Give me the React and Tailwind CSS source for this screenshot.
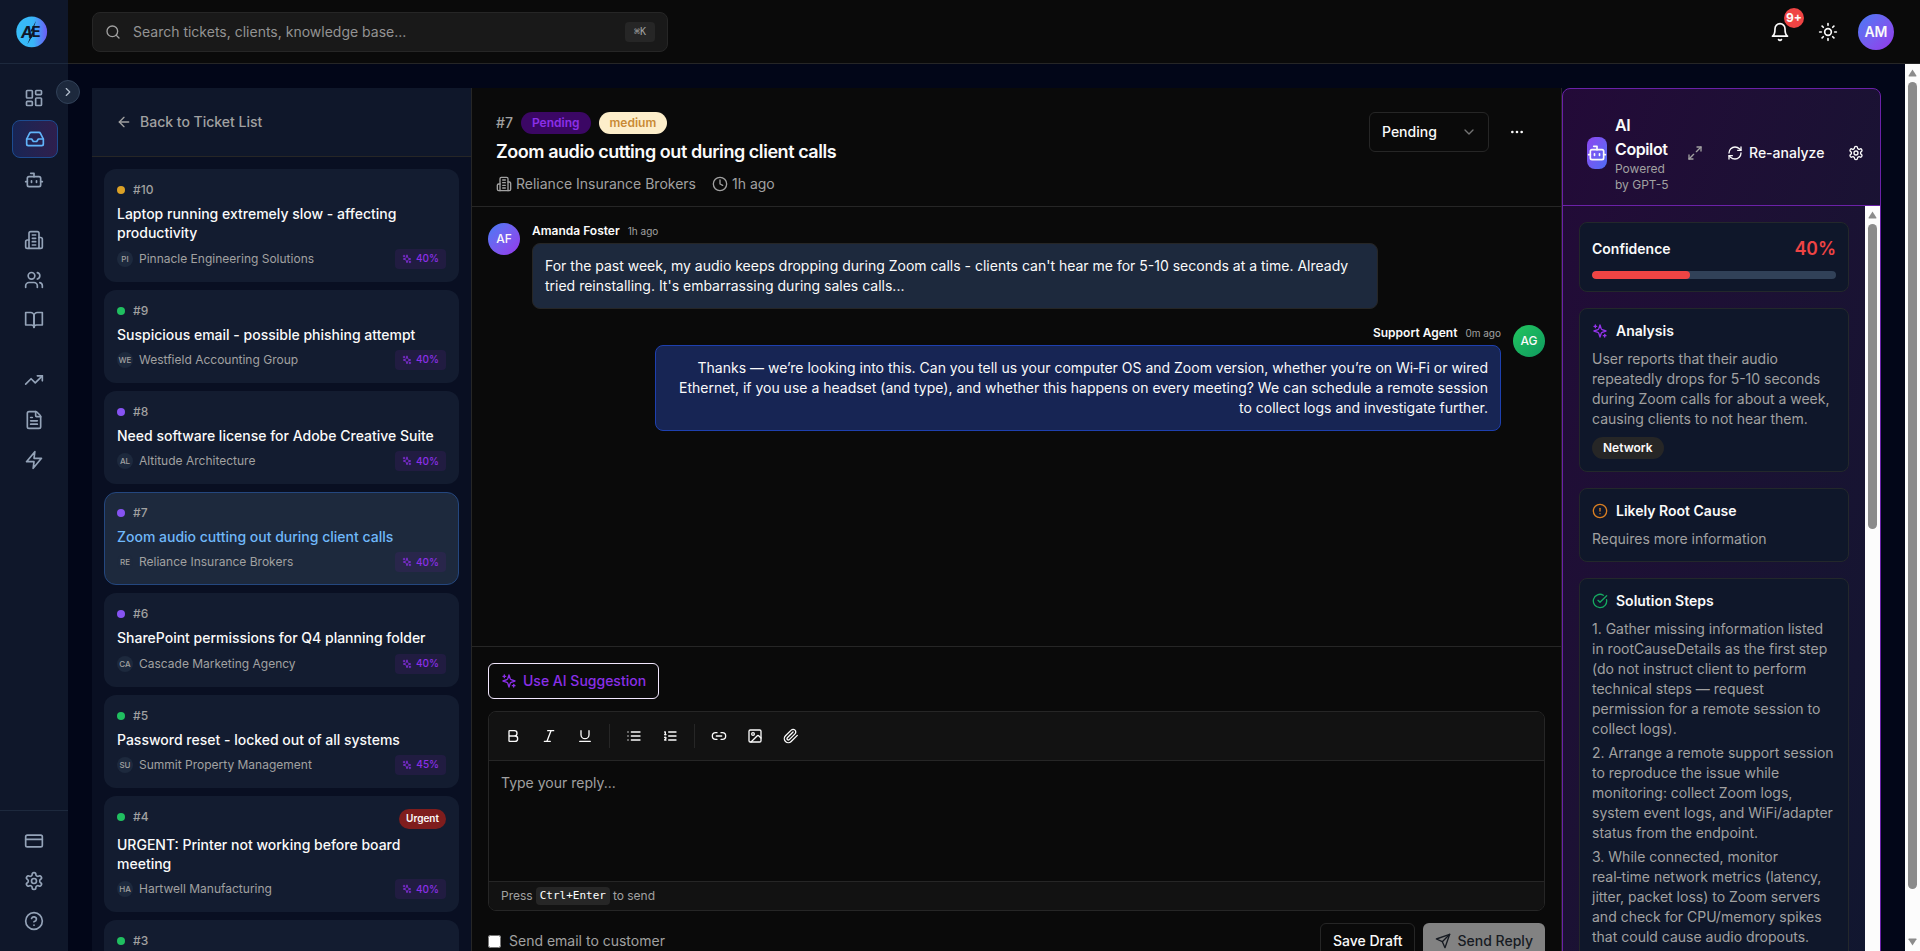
import React from 'react';
import {
  LayoutDashboard,
  Inbox,
  Bot,
  Users,
  TrendingUp,
  FileText,
  CreditCard,
  CircleHelp,
  ChevronRight,
  ChevronDown,
  Search,
  Sun,
  ArrowLeft,
  Clock,
  Ellipsis,
  Bold,
  Italic,
  Underline,
  Link2,
  Image,
  Maximize2,
  RefreshCw,
  CircleAlert,
  CircleCheckBig,
} from 'lucide-react';

const Icon = ({ children, className }) => (
  <svg
    xmlns="http://www.w3.org/2000/svg"
    viewBox="0 0 24 24"
    fill="none"
    stroke="currentColor"
    strokeWidth="2"
    strokeLinecap="round"
    strokeLinejoin="round"
    aria-hidden="true"
    className={className}
  >
    {children}
  </svg>
);

const Sparkles = ({ className }) => (
  <Icon className={className}>
    <path d="m12 3-1.912 5.813a2 2 0 0 1-1.275 1.275L3 12l5.813 1.912a2 2 0 0 1 1.275 1.275L12 21l1.912-5.813a2 2 0 0 1 1.275-1.275L21 12l-5.813-1.912a2 2 0 0 1-1.275-1.275L12 3Z" />
    <path d="M5 3v4" />
    <path d="M19 17v4" />
    <path d="M3 5h4" />
    <path d="M17 19h4" />
  </Icon>
);

const Building = ({ className }) => (
  <Icon className={className}>
    <path d="M6 22V4a2 2 0 0 1 2-2h8a2 2 0 0 1 2 2v18Z" />
    <path d="M6 12H4a2 2 0 0 0-2 2v6a2 2 0 0 0 2 2h2" />
    <path d="M18 9h2a2 2 0 0 1 2 2v9a2 2 0 0 1-2 2h-2" />
    <path d="M10 6h4" />
    <path d="M10 10h4" />
    <path d="M10 14h4" />
    <path d="M10 18h4" />
  </Icon>
);

const Book = ({ className }) => (
  <Icon className={className}>
    <path d="M2 3h6a4 4 0 0 1 4 4v14a3 3 0 0 0-3-3H2z" />
    <path d="M22 3h-6a4 4 0 0 0-4 4v14a3 3 0 0 1 3-3h7z" />
  </Icon>
);

const Zap = ({ className }) => (
  <Icon className={className}>
    <polygon points="13 2 3 14 12 14 11 22 21 10 12 10 13 2" />
  </Icon>
);

const Gear = ({ className }) => (
  <Icon className={className}>
    <path d="M12.22 2h-.44a2 2 0 0 0-2 2v.18a2 2 0 0 1-1 1.73l-.43.25a2 2 0 0 1-2 0l-.15-.08a2 2 0 0 0-2.73.73l-.22.38a2 2 0 0 0 .73 2.73l.15.1a2 2 0 0 1 1 1.72v.51a2 2 0 0 1-1 1.74l-.15.09a2 2 0 0 0-.73 2.73l.22.38a2 2 0 0 0 2.73.73l.15-.08a2 2 0 0 1 2 0l.43.25a2 2 0 0 1 1 1.73V20a2 2 0 0 0 2 2h.44a2 2 0 0 0 2-2v-.18a2 2 0 0 1 1-1.73l.43-.25a2 2 0 0 1 2 0l.15.08a2 2 0 0 0 2.73-.73l.22-.39a2 2 0 0 0-.73-2.73l-.15-.08a2 2 0 0 1-1-1.74v-.5a2 2 0 0 1 1-1.74l.15-.09a2 2 0 0 0 .73-2.73l-.22-.38a2 2 0 0 0-2.73-.73l-.15.08a2 2 0 0 1-2 0l-.43-.25a2 2 0 0 1-1-1.73V4a2 2 0 0 0-2-2z" />
    <circle cx="12" cy="12" r="3" />
  </Icon>
);

const Bell = ({ className }) => (
  <Icon className={className}>
    <path d="M6 8a6 6 0 0 1 12 0c0 7 3 9 3 9H3s3-2 3-9" />
    <path d="M10.3 21a1.94 1.94 0 0 0 3.4 0" />
  </Icon>
);

const BulletList = ({ className }) => (
  <Icon className={className}>
    <path d="M8 6h13" />
    <path d="M8 12h13" />
    <path d="M8 18h13" />
    <path d="M3 6h.01" />
    <path d="M3 12h.01" />
    <path d="M3 18h.01" />
  </Icon>
);

const NumberList = ({ className }) => (
  <Icon className={className}>
    <path d="M10 6h11" />
    <path d="M10 12h11" />
    <path d="M10 18h11" />
    <path d="M4 6h1v4" />
    <path d="M4 10h2" />
    <path d="M6 18H4c0-1 2-2 2-3s-1-1.5-2-1" />
  </Icon>
);

const Clip = ({ className }) => (
  <Icon className={className}>
    <path d="m21.44 11.05-9.19 9.19a6 6 0 0 1-8.49-8.49l8.57-8.57A4 4 0 1 1 18 8.84l-8.59 8.57a2 2 0 0 1-2.83-2.83l8.49-8.48" />
  </Icon>
);

const Send = ({ className }) => (
  <Icon className={className}>
    <path d="m22 2-7 20-4-9-9-4Z" />
    <path d="M22 2 11 13" />
  </Icon>
);

const Logo = () => (
  <svg viewBox="0 0 32 32" className="w-8 h-8" role="img" aria-label="AE">
    <defs>
      <linearGradient id="logo" x1="0" y1="0" x2="1" y2="0">
        <stop offset="0" stopColor="#38bdf8" />
        <stop offset="0.55" stopColor="#38b6f8" />
        <stop offset="1" stopColor="#6d5cf6" />
      </linearGradient>
    </defs>
    <circle cx="15.7" cy="15.8" r="15.4" fill="url(#logo)" />
    <text
      x="5"
      y="21.6"
      fill="#0f172a"
      fontFamily="Inter, sans-serif"
      fontSize="16"
      fontWeight="700"
      fontStyle="italic"
    >
      A
    </text>
    <text x="15.5" y="21.2" fill="#0f172a" fontFamily="Inter, sans-serif" fontSize="15" fontWeight="700">
      E
    </text>
    <path d="M20 5 14.2 15.6h2.2L11.4 28.2l7-11.4h-2.4z" fill="#0f172a" />
  </svg>
);

const navGroups = [
  [
    { label: 'Dashboard', icon: LayoutDashboard },
    { label: 'Tickets', icon: Inbox, active: true },
    { label: 'AI Agent', icon: Bot },
  ],
  [
    { label: 'Clients', icon: Building },
    { label: 'Team', icon: Users },
    { label: 'Knowledge Base', icon: Book },
  ],
  [
    { label: 'Analytics', icon: TrendingUp },
    { label: 'Reports', icon: FileText },
    { label: 'Automations', icon: Zap },
  ],
];

const footerNav = [
  { label: 'Billing', icon: CreditCard },
  { label: 'Settings', icon: Gear },
  { label: 'Help', icon: CircleHelp },
];

const tickets = [
  { id: 10, dot: 'bg-[#dba126]', title: 'Laptop running extremely slow - affecting productivity', code: 'PI', client: 'Pinnacle Engineering Solutions', score: 40 },
  { id: 9, dot: 'bg-[#20bf60]', title: 'Suspicious email - possible phishing attempt', code: 'WE', client: 'Westfield Accounting Group', score: 40 },
  { id: 8, dot: 'bg-[#8653f2]', title: 'Need software license for Adobe Creative Suite', code: 'AL', client: 'Altitude Architecture', score: 40 },
  { id: 7, dot: 'bg-[#8653f2]', title: 'Zoom audio cutting out during client calls', code: 'RE', client: 'Reliance Insurance Brokers', score: 40, active: true },
  { id: 6, dot: 'bg-[#8653f2]', title: 'SharePoint permissions for Q4 planning folder', code: 'CA', client: 'Cascade Marketing Agency', score: 40 },
  { id: 5, dot: 'bg-[#20bf60]', title: 'Password reset - locked out of all systems', code: 'SU', client: 'Summit Property Management', score: 45 },
  { id: 4, dot: 'bg-[#20bf60]', title: 'URGENT: Printer not working before board meeting', code: 'HA', client: 'Hartwell Manufacturing', score: 40, urgent: true },
  { id: 3, dot: 'bg-[#20bf60]', title: 'VPN connection drops every few minutes', code: 'NO', client: 'Northside Dental Group', score: 40 },
];

const steps = [
  'Gather missing information listed in rootCauseDetails as the first step (do not instruct client to perform technical steps — request permission for a remote session to collect logs).',
  'Arrange a remote support session to reproduce the issue while monitoring: collect Zoom logs, system event logs, and WiFi/adapter status from the endpoint.',
  'While connected, monitor real‑time network metrics (latency, jitter, packet loss) to Zoom servers and check for CPU/memory spikes that could cause audio dropouts.',
];

const NavItem = ({ item }) => {
  const { icon: ItemIcon, label, active } = item;
  return (
    <a
      href="#"
      aria-label={label}
      className={
        active
          ? 'w-fit px-3 py-2 rounded-lg border border-[#1d4b8f] bg-linear-to-r from-[#172554] to-[#2e1f4d] text-[#60b4fa]'
          : 'w-fit px-3 py-2 rounded-lg text-[#94a3b8]'
      }
    >
      <ItemIcon className="w-5 h-5" />
    </a>
  );
};

const Sidebar = () => (
  <aside className="relative flex flex-col shrink-0 w-17 h-full bg-[#0f172a]">
    <div className="flex items-center shrink-0 h-16 px-4 border-b border-slate-800">
      <Logo />
    </div>
    <nav className="flex flex-col grow gap-6 px-3 py-4">
      {navGroups.map((group, i) => (
        <div key={i} className="flex flex-col gap-1">
          {group.map((item) => (
            <NavItem key={item.label} item={item} />
          ))}
        </div>
      ))}
    </nav>
    <div className="flex flex-col gap-1 p-3 border-t border-slate-800">
      {footerNav.map((item) => (
        <NavItem key={item.label} item={item} />
      ))}
    </div>
    {/* collapse toggle, sits on the edge */}
    <button
      type="button"
      aria-label="Expand sidebar"
      className="absolute top-20 -right-3 z-10 flex items-center justify-center w-6 h-6 rounded-full border border-slate-700 bg-slate-800 text-[#b4bfcd]"
    >
      <ChevronRight className="w-3.5 h-3.5" />
    </button>
  </aside>
);

const TopBar = () => (
  <header className="flex items-center justify-between shrink-0 h-16 px-6 border-b border-neutral-800 bg-[#0a0a0a]">
    <label className="flex items-center w-full max-w-xl h-10 gap-3 px-3 rounded-lg border border-neutral-800 bg-[#191919]">
      <Search className="shrink-0 w-4 h-4 text-neutral-400" />
      <input
        type="search"
        aria-label="Search"
        placeholder="Search tickets, clients, knowledge base..."
        className="grow min-w-0 text-sm text-white placeholder:text-[#939393] outline-none"
      />
      <kbd className="flex items-center justify-center w-[30px] h-5 rounded bg-neutral-800 font-['DejaVu_Sans_Mono','DejaVu_Sans',monospace] text-[10px] text-neutral-400">
        ⌘K
      </kbd>
    </label>
    <div className="flex items-center gap-2 text-neutral-50">
      <button type="button" aria-label="Notifications" className="relative flex items-center justify-center w-10 h-10">
        <Bell className="w-5 h-5" />
        <span className="absolute -top-1 -right-1 flex items-center justify-center w-5 h-5 rounded-full bg-[#ef4444] text-xs font-bold">
          9+
        </span>
      </button>
      <button type="button" aria-label="Toggle theme" className="flex items-center justify-center w-10 h-10">
        <Sun className="w-5 h-5" />
      </button>
      <button type="button" aria-label="Account" className="flex items-center justify-center w-10 h-10">
        <span className="flex items-center justify-center w-9 h-9 rounded-full bg-linear-to-br from-[#3f7af5] to-[#9333ea] text-sm font-semibold">
          AM
        </span>
      </button>
    </div>
  </header>
);

const TicketCard = ({ ticket }) => (
  <a
    href="#"
    className={
      ticket.active
        ? 'block p-3 rounded-xl border border-[#24477f] bg-slate-800'
        : 'block p-3 rounded-xl border border-transparent bg-slate-800/50'
    }
  >
    <div className="flex items-start justify-between mb-1.5">
      <div className="flex items-center gap-2">
        <span className={`w-2 h-2 rounded-full ${ticket.dot}`} />
        <span className="text-xs font-medium text-neutral-400">{`#${ticket.id}`}</span>
      </div>
      {ticket.urgent && (
        <span className="flex items-center h-5 px-[7px] rounded-full bg-[#7f1d1d] text-[10px] font-semibold text-neutral-50">
          Urgent
        </span>
      )}
    </div>
    <h3
      className={
        ticket.active
          ? 'mb-1.5 text-sm leading-snug font-medium text-[#70b8fa]'
          : 'mb-1.5 text-sm leading-snug font-medium text-neutral-50'
      }
    >
      {ticket.title}
    </h3>
    <div className="flex items-center justify-between">
      <div className="flex items-center gap-1.5">
        <span className="flex items-center justify-center w-4 h-4 rounded-full bg-slate-800 text-[8px] font-medium text-neutral-400">
          {ticket.code}
        </span>
        <span className="text-xs text-neutral-400">{ticket.client}</span>
      </div>
      <span className="flex items-center h-5 gap-1 px-[7px] rounded bg-[#581c87]/20 text-[10px] font-medium text-[#8b2fe8]">
        <Sparkles className="w-2.5 h-2.5" />
        {`${ticket.score}%`}
      </span>
    </div>
  </a>
);

const TicketList = () => (
  <section className="flex flex-col shrink-0 w-95 overflow-hidden border-r border-neutral-800 bg-slate-900/50">
    <div className="p-4 border-b border-neutral-800 bg-[#0f172a]">
      <button type="button" className="flex items-center h-9 gap-2 px-2 text-sm font-medium text-neutral-400">
        <ArrowLeft className="w-4 h-4" />
        Back to Ticket List
      </button>
    </div>
    <div className="flex flex-col gap-2 p-3">
      {tickets.map((ticket) => (
        <TicketCard key={ticket.id} ticket={ticket} />
      ))}
    </div>
  </section>
);

const TicketHeader = () => (
  <div className="flex items-start justify-between px-6 pt-6 pb-3 border-b border-neutral-800">
    <div>
      <div className="flex items-center gap-2">
        <span className="text-sm font-medium text-neutral-400">#7</span>
        <span className="flex items-center h-[22px] px-[11px] rounded-full bg-[#3b0764] text-xs font-semibold text-[#8b2fe8]">
          Pending
        </span>
        <span className="flex items-center h-[22px] px-[11px] rounded-full bg-[#fdeeca] text-xs font-semibold text-[#c98a35]">
          medium
        </span>
      </div>
      <h1 className="mt-1 text-lg leading-7 font-semibold tracking-tight text-neutral-50">
        Zoom audio cutting out during client calls
      </h1>
      <div className="flex items-center gap-4 mt-2 text-sm text-neutral-400">
        <span className="flex items-center gap-1">
          <Building className="w-4 h-4" />
          Reliance Insurance Brokers
        </span>
        <span className="flex items-center gap-1">
          <Clock className="w-4 h-4" />
          1h ago
        </span>
      </div>
    </div>
    <div className="flex items-center gap-2">
      <div className="relative">
        <select
          aria-label="Status"
          defaultValue="Pending"
          className="appearance-none w-30 h-10 px-3 rounded-md border border-neutral-800 bg-[#0a0a0a] text-sm font-medium text-neutral-50"
        >
          <option>Open</option>
          <option>Pending</option>
          <option>Resolved</option>
        </select>
        <ChevronDown className="absolute top-3 right-3 w-4 h-4 text-neutral-500 pointer-events-none" />
      </div>
      <button type="button" aria-label="More actions" className="flex items-center justify-center w-10 h-10 text-neutral-50">
        <Ellipsis className="w-4 h-4" />
      </button>
    </div>
  </div>
);

const Messages = () => (
  <div className="flex flex-col grow gap-4 p-4 min-h-0 overflow-hidden">
    <article className="flex items-start gap-3">
      <span className="flex items-center justify-center shrink-0 w-8 h-8 rounded-full bg-linear-to-br from-[#3f7af5] to-[#9333ea] text-xs font-medium text-neutral-50">
        AF
      </span>
      <div className="flex flex-col grow">
        <div className="flex items-center gap-2 mb-1">
          <span className="text-xs font-semibold text-neutral-50">Amanda Foster</span>
          <span className="text-[10px] text-neutral-400">1h ago</span>
        </div>
        <p className="w-[846px] max-w-full p-3 rounded-lg border border-neutral-800 bg-slate-800 text-sm text-neutral-50">
          For the past week, my audio keeps dropping during Zoom calls - clients can't hear me for 5-10 seconds at a
          time. Already tried reinstalling. It's embarrassing during sales calls...
        </p>
      </div>
    </article>
    <article className="flex flex-row-reverse items-start gap-3">
      <span className="flex items-center justify-center shrink-0 w-8 h-8 rounded-full bg-linear-to-br from-[#22c55e] to-[#0f9a5f] text-xs font-medium text-neutral-50">
        AG
      </span>
      <div className="flex flex-col items-end grow">
        <div className="flex items-center gap-2 mb-1">
          <span className="text-xs font-semibold text-neutral-50">Support Agent</span>
          <span className="text-[10px] text-neutral-400">0m ago</span>
        </div>
        <p className="w-[846px] max-w-full p-3 rounded-lg border border-[#1e40af] bg-[#172554] text-sm text-right text-neutral-50">
          Thanks — we’re looking into this. Can you tell us your computer OS and Zoom version, whether you’re on Wi‑Fi
          or wired Ethernet, if you use a headset (and type), and whether this happens on every meeting? We can
          schedule a remote session to collect logs and investigate further.
        </p>
      </div>
    </article>
  </div>
);

const ToolButton = ({ label, children }) => (
  <button type="button" aria-label={label} className="flex items-center justify-center w-8 h-8">
    {children}
  </button>
);

const Composer = () => (
  <div className="flex flex-col shrink-0 items-start gap-3 p-4 border-t border-neutral-800">
    <button
      type="button"
      className="flex items-center h-9 gap-1.5 px-3 rounded-md border border-purple-100 text-sm font-medium text-[#8b2fe8]"
    >
      <Sparkles className="w-4 h-4" />
      Use AI Suggestion
    </button>
    <div className="w-full overflow-hidden rounded-lg border border-neutral-800">
      <div className="flex items-center gap-1 p-2 border-b border-neutral-800 bg-[#121212] text-neutral-50">
        <ToolButton label="Bold"><Bold className="w-4 h-4" /></ToolButton>
        <ToolButton label="Italic"><Italic className="w-4 h-4" /></ToolButton>
        <ToolButton label="Underline"><Underline className="w-4 h-4" /></ToolButton>
        <span className="w-px h-6 mx-1 bg-neutral-800" />
        <ToolButton label="Bullet list"><BulletList className="w-4 h-4" /></ToolButton>
        <ToolButton label="Numbered list"><NumberList className="w-4 h-4" /></ToolButton>
        <span className="w-px h-6 mx-1 bg-neutral-800" />
        <ToolButton label="Link"><Link2 className="w-4 h-4" /></ToolButton>
        <ToolButton label="Image"><Image className="w-4 h-4" /></ToolButton>
        <ToolButton label="Attachment"><Clip className="w-4 h-4" /></ToolButton>
      </div>
      <textarea
        aria-label="Reply"
        placeholder="Type your reply..."
        className="block w-full h-30 p-3 resize-none bg-[#0a0a0a] text-sm text-neutral-50 placeholder:text-neutral-400 outline-none"
      />
      <div className="flex items-center h-[29px] gap-[3px] px-3 border-t border-neutral-800 bg-[#121212] text-xs text-neutral-400">
        Press
        <kbd className="flex items-center h-[18px] px-1 rounded bg-neutral-800 font-['DejaVu_Sans_Mono',monospace] text-[11px] text-white">
          Ctrl+Enter
        </kbd>
        to send
      </div>
    </div>
    <div className="flex items-center justify-between w-full">
      <label className="flex items-center gap-2 text-sm text-neutral-400">
        <input type="checkbox" className="w-[13px] h-[13px]" />
        Send email to customer
      </label>
      <div className="flex gap-2">
        <button
          type="button"
          className="flex items-center h-9 px-3 rounded-md border border-neutral-800 text-sm font-medium text-neutral-50"
        >
          Save Draft
        </button>
        <button
          type="button"
          disabled
          className="flex items-center h-9 gap-1.5 px-3 rounded-md bg-[#828282] text-sm font-medium text-[#171b22]"
        >
          <Send className="w-4 h-4" />
          Send Reply
        </button>
      </div>
    </div>
  </div>
);

const CopilotCard = ({ icon, title, children }) => (
  <section className="shrink-0 p-3 rounded-lg border border-[#23282b] bg-[#0f172a]">
    <h3 className="flex items-center gap-2 mb-2 text-sm font-semibold text-neutral-50">
      {icon}
      {title}
    </h3>
    {children}
  </section>
);

const Scrollbar = ({ thumb }) => (
  <div className="flex flex-col items-center shrink-0 w-[15px] h-full gap-1 py-1 bg-[#fcfcfc]">
    <svg viewBox="0 0 9 9" className="shrink-0 w-[9px] h-[10px] fill-[#8b8b8b]" aria-hidden="true">
      <path d="M4.5 1 8.5 7.2Q8.6 8 8 8H1Q.4 8 .5 7.2Z" />
    </svg>
    <div className={`w-[9px] rounded-full bg-[#8b8b8b] ${thumb}`} />
    <svg viewBox="0 0 9 9" className="shrink-0 w-[9px] h-[10px] mt-auto fill-[#8b8b8b]" aria-hidden="true">
      <path d="M4.5 8 8.5 1.8Q8.6 1 8 1H1Q.4 1 .5 1.8Z" />
    </svg>
  </div>
);

const Copilot = () => (
  <aside className="shrink-0 w-80 border-l border-neutral-800 bg-slate-950">
    <div className="flex flex-col h-full overflow-hidden rounded-lg border border-[#6b21a8] bg-linear-to-br from-[#230a38] to-[#10172f]">
      <div className="flex items-center gap-2 pt-6 pb-3 pl-6 border-b border-[#6b21a8] text-neutral-50">
        <span className="flex items-center justify-center shrink-0 w-5 h-8 rounded-lg bg-linear-to-br from-[#8a45f0] to-[#4a6cf5]">
          <Bot className="shrink-0 w-5 h-5" />
        </span>
        <div className="w-14">
          <h2 className="text-base font-semibold tracking-tight">AI Copilot</h2>
          <p className="text-xs text-neutral-400">Powered by GPT-5</p>
        </div>
        <button type="button" aria-label="Expand" className="flex items-center justify-center shrink-0 w-8 h-8 text-neutral-400">
          <Maximize2 className="w-4 h-4" />
        </button>
        <button type="button" className="flex items-center shrink-0 h-9 gap-1.5 px-2 text-sm font-medium">
          <RefreshCw className="w-4 h-4" />
          Re-analyze
        </button>
        <button type="button" aria-label="Copilot settings" className="flex items-center justify-center shrink-0 w-8 h-8">
          <Gear className="w-4 h-4" />
        </button>
      </div>
      <div className="flex grow min-h-0">
        <div className="flex flex-col grow min-w-0 gap-4 p-4 overflow-hidden">
          <section className="shrink-0 p-3 rounded-lg border border-[#23282b] bg-[#0f172a]">
            <div className="flex items-center justify-between mb-2">
              <span className="text-sm font-semibold text-neutral-50">Confidence</span>
              <span className="text-lg font-semibold tabular-nums text-[#ef4444]">40%</span>
            </div>
            <div className="h-2 overflow-hidden rounded-full bg-slate-700">
              <div className="w-2/5 h-full rounded-full bg-[#ef4444]" />
            </div>
          </section>
          <CopilotCard title="Analysis" icon={<Sparkles className="w-4 h-4 text-[#9333ea]" />}>
            <p className="text-sm text-neutral-400">
              User reports that their audio repeatedly drops for 5-10 seconds during Zoom calls for about a week,
              causing clients to not hear them.
            </p>
            <span className="flex items-center w-fit h-[22px] mt-2 px-[11px] rounded-full bg-neutral-800 text-xs font-semibold text-neutral-50">
              Network
            </span>
          </CopilotCard>
          <CopilotCard title="Likely Root Cause" icon={<CircleAlert className="w-4 h-4 text-[#d97f22]" />}>
            <p className="text-sm text-neutral-400">Requires more information</p>
          </CopilotCard>
          <CopilotCard title="Solution Steps" icon={<CircleCheckBig className="w-4 h-4 text-[#16a860]" />}>
            <ol className="flex flex-col gap-1 text-sm text-neutral-400">
              {steps.map((step, i) => (
                <li key={step}>{`${i + 1}. ${step}`}</li>
              ))}
            </ol>
          </CopilotCard>
        </div>
        <Scrollbar thumb="h-[305px]" />
      </div>
    </div>
  </aside>
);

export default function App() {
  return (
    <div className="flex h-screen overflow-hidden bg-slate-950 font-['Inter',sans-serif]">
      <Sidebar />
      <div className="flex flex-col grow min-w-0">
        <TopBar />
        <div className="flex grow min-h-0">
          <main className="grow min-w-0 p-6 overflow-hidden">
            {/* panels are as tall as the scroll area, the padding pushes them past the fold */}
            <div className="flex h-[calc(100vh-64px)]">
              <TicketList />
              <section className="flex flex-col grow min-w-0 bg-[#0a0a0a]">
                <TicketHeader />
                <Messages />
                <Composer />
              </section>
              <Copilot />
            </div>
          </main>
          <Scrollbar thumb="h-[807px]" />
        </div>
      </div>
    </div>
  );
}
